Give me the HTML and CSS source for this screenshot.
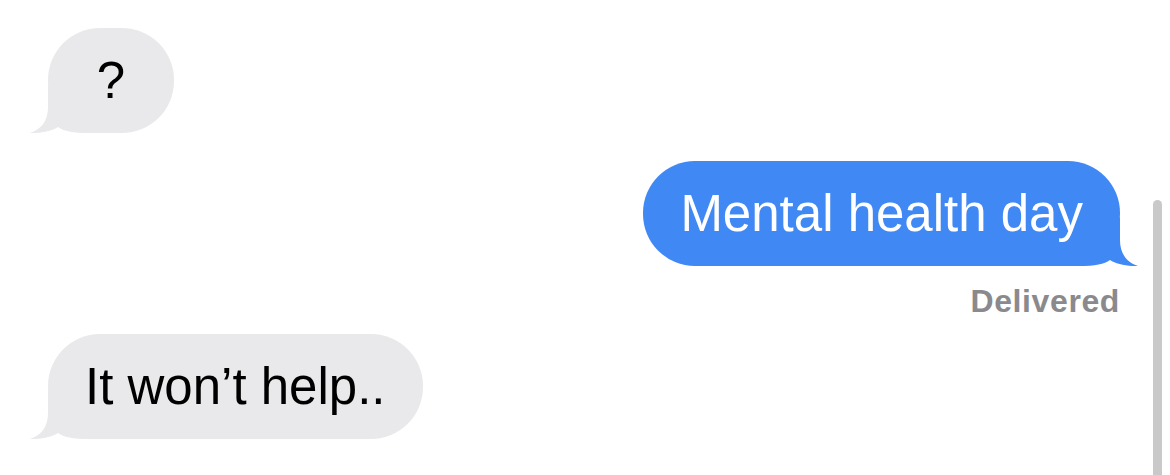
FILE: index.html
```html
<!DOCTYPE html>
<html lang="en">
<head>
<meta charset="utf-8">
<title>Messages</title>
<link rel="stylesheet" href="styles.css">
</head>
<body>
<main class="thread">
  <div class="bubble received short">
    <span class="text">?</span>
    <svg class="tail tail-left" width="80" height="48" viewBox="0 0 80 48" aria-hidden="true">
      <path d="M18 0 L18 22 C18 35 12 44 0 48 C11 48.5 22 46 28 42 C34 46 42 48 60 48 L80 48 L80 0 Z"/>
    </svg>
  </div>

  <div class="bubble sent">
    <span class="text">Mental health day</span>
    <svg class="tail tail-right" width="80" height="48" viewBox="0 0 80 48" aria-hidden="true">
      <path d="M62 0 L62 22 C62 35 68 44 80 48 C69 48.5 58 46 52 42 C46 46 38 48 20 48 L0 48 L0 0 Z"/>
    </svg>
  </div>
  <div class="status">Delivered</div>

  <div class="bubble received">
    <span class="text">It won’t help..</span>
    <svg class="tail tail-left" width="80" height="48" viewBox="0 0 80 48" aria-hidden="true">
      <path d="M18 0 L18 22 C18 35 12 44 0 48 C11 48.5 22 46 28 42 C34 46 42 48 60 48 L80 48 L80 0 Z"/>
    </svg>
  </div>
</main>
<div class="scrollbar"></div>
</body>
</html>
```

FILE: styles.css
```css
html, body {
  margin: 0;
  padding: 0;
  background: #ffffff;
}

body {
  width: 1170px;
  height: 475px;
  overflow: hidden;
  position: relative;
  font-family: "Liberation Sans", Arial, sans-serif;
}

.thread {
  display: flex;
  flex-direction: column;
  padding: 28px 50px 0 48px;
}

.bubble {
  position: relative;
  padding: 22px 37px;
  border-radius: 52px;
  font-size: 51px;
  line-height: 61px;
  white-space: nowrap;
}

.bubble .text {
  position: relative;
  z-index: 1;
}

.received {
  align-self: flex-start;
  background: #e9e9eb;
  color: #000000;
}

.received .tail path {
  fill: #e9e9eb;
}

.short {
  min-width: 52px;
  text-align: center;
}

.sent {
  align-self: flex-end;
  margin-top: 28px;
  background: #4088f4;
  color: #ffffff;
}

.sent .tail path {
  fill: #4088f4;
}

.tail {
  position: absolute;
  bottom: 0;
  z-index: 0;
  display: block;
}

.tail-left {
  left: -18px;
}

.tail-right {
  right: -18px;
}

.status {
  align-self: flex-end;
  margin-top: 17px;
  font-size: 32px;
  line-height: 36px;
  font-weight: bold;
  letter-spacing: 0.6px;
  color: #8a8a8e;
}

.status + .bubble {
  margin-top: 15px;
}

.scrollbar {
  position: absolute;
  right: 8px;
  top: 200px;
  bottom: 0;
  width: 9px;
  background: #c9c9c9;
  border-radius: 5px 5px 0 0;
}
```
